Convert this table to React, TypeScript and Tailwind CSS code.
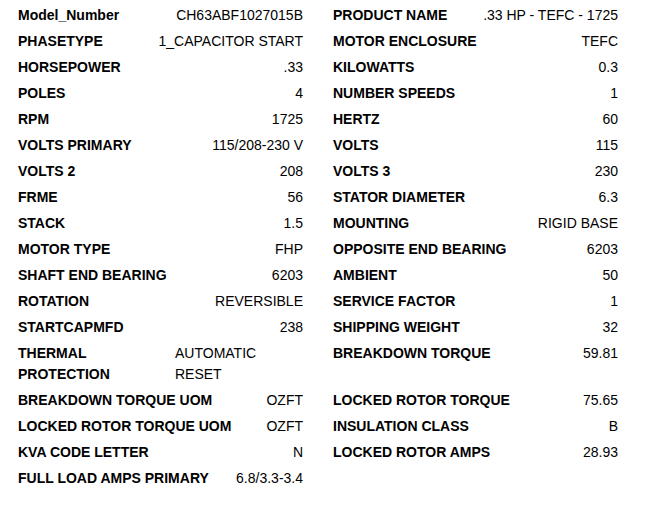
const left: [string, string][] = [
  ['Model_Number', 'CH63ABF1027015B'],
  ['PHASETYPE', '1_CAPACITOR START'],
  ['HORSEPOWER', '.33'],
  ['POLES', '4'],
  ['RPM', '1725'],
  ['VOLTS PRIMARY', '115/208-230 V'],
  ['VOLTS 2', '208'],
  ['FRME', '56'],
  ['STACK', '1.5'],
  ['MOTOR TYPE', 'FHP'],
  ['SHAFT END BEARING', '6203'],
  ['ROTATION', 'REVERSIBLE'],
  ['STARTCAPMFD', '238'],
  ['THERMAL PROTECTION', 'AUTOMATIC RESET'],
  ['BREAKDOWN TORQUE UOM', 'OZFT'],
  ['LOCKED ROTOR TORQUE UOM', 'OZFT'],
  ['KVA CODE LETTER', 'N'],
  ['FULL LOAD AMPS PRIMARY', '6.8/3.3-3.4'],
];

const right: ([string, string] | null)[] = [
  ['PRODUCT NAME', '.33 HP - TEFC - 1725'],
  ['MOTOR ENCLOSURE', 'TEFC'],
  ['KILOWATTS', '0.3'],
  ['NUMBER SPEEDS', '1'],
  ['HERTZ', '60'],
  ['VOLTS', '115'],
  ['VOLTS 3', '230'],
  ['STATOR DIAMETER', '6.3'],
  ['MOUNTING', 'RIGID BASE'],
  ['OPPOSITE END BEARING', '6203'],
  ['AMBIENT', '50'],
  ['SERVICE FACTOR', '1'],
  ['SHIPPING WEIGHT', '32'],
  ['BREAKDOWN TORQUE', '59.81'],
  ['LOCKED ROTOR TORQUE', '75.65'],
  ['INSULATION CLASS', 'B'],
  ['LOCKED ROTOR AMPS', '28.93'],
  null,
];

function Cell({ item, wrap }: { item: [string, string] | null; wrap?: boolean }) {
  if (!item) return <div />;
  if (wrap) {
    return (
      <div className="flex items-start py-[2.5px]">
        <span className="w-[157px] shrink-0 font-bold">{item[0]}</span>
        <span className="w-[100px] text-left">{item[1]}</span>
      </div>
    );
  }
  return (
    <div className="flex items-start justify-between gap-4 py-[2.5px]">
      <span className="font-bold">{item[0]}</span>
      <span className="text-right">{item[1]}</span>
    </div>
  );
}

export default function App() {
  return (
    <div
      className="min-h-[509px] bg-white pt-[2.5px] pl-[18px] text-[14px] leading-[21px] text-black"
      style={{ fontFamily: '"Liberation Sans", Arial, sans-serif' }}
    >
      <div className="grid grid-cols-[285px_285px] gap-x-[30px]">
        {left.map((item, i) => (
          <>
            <Cell key={`l${i}`} item={item} wrap={item[0] === 'THERMAL PROTECTION'} />
            <Cell key={`r${i}`} item={right[i]} />
          </>
        ))}
      </div>
    </div>
  );
}
